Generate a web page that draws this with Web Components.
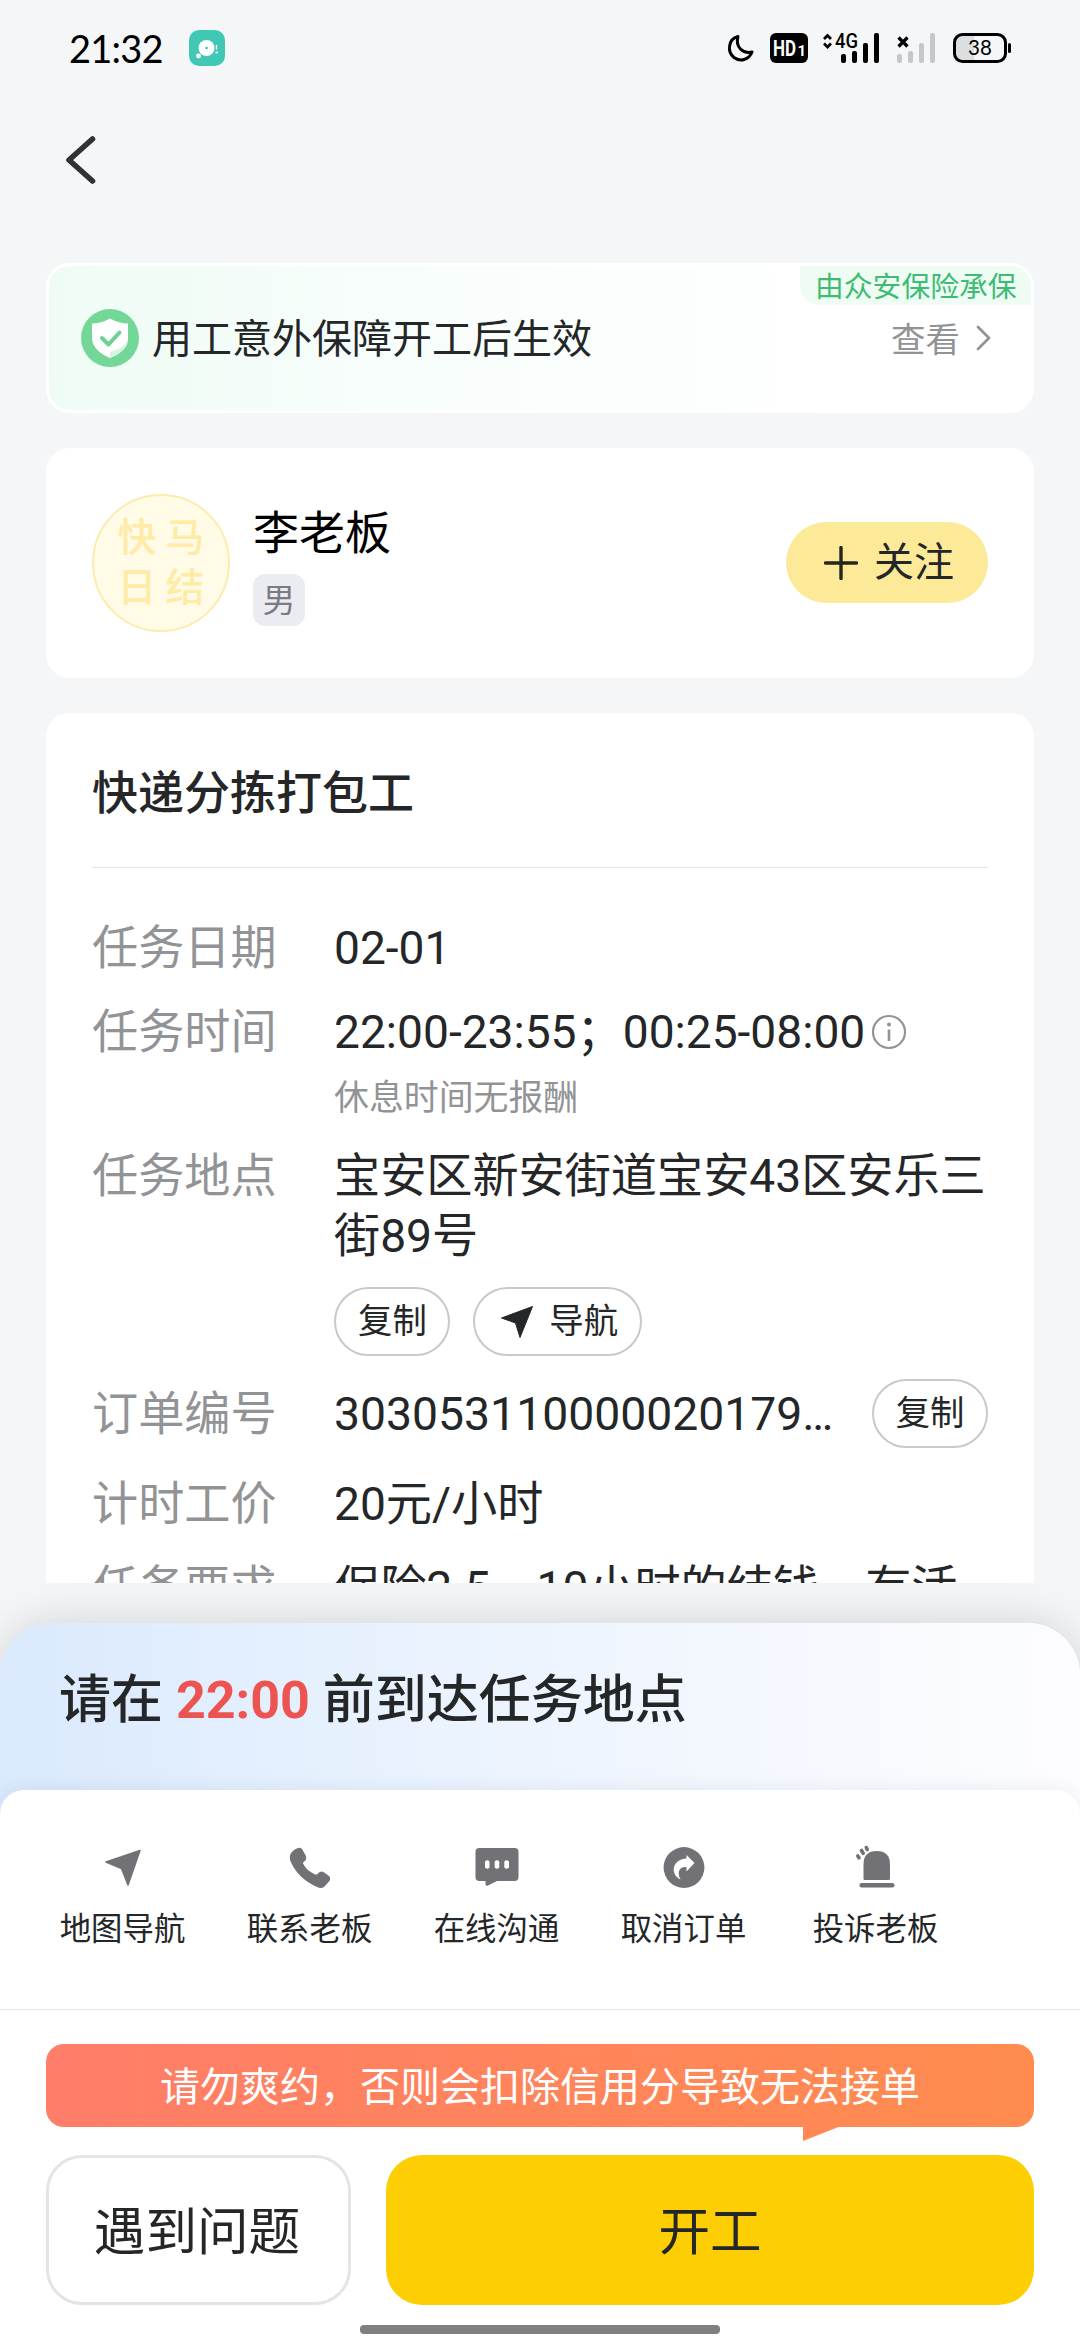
<!DOCTYPE html>
<html lang="zh-CN">
<head>
<meta charset="utf-8">
<title>任务详情</title>
<style>
  html, body { margin: 0; padding: 0; }
  body {
    width: 1080px; height: 2340px; overflow: hidden; background: #f4f6f8; color: #242628;
    font-family: Roboto, "Noto Sans CJK SC", sans-serif; font-size: 46.15px;
  }
</style>
</head>
<body>
<order-page></order-page>
<script>
const define = (name, html) => {
  const tpl = document.createElement('template');
  tpl.innerHTML = '<style>*{box-sizing:border-box}svg{display:block;flex:none}</style>' + html;
  customElements.define(name, class extends HTMLElement {
    constructor() {
      super();
      this.attachShadow({ mode: 'open' }).appendChild(tpl.content.cloneNode(true));
    }
  });
};

define('status-bar', `
<style>
  :host { display: flex; height: 96px; align-items: center; padding: 0 68px 0 69px; color: #000; box-sizing: border-box; }
  .time { font: 400 38px/40px Lato, sans-serif; letter-spacing: -0.8px; width: 120px; white-space: nowrap; margin-top: -1px; }
  .right { margin-left: auto; }
  text { font-family: Roboto, sans-serif; }
</style>
<span class="time">21:32</span>
<svg width="36" height="36" viewBox="0 0 36 36"><rect width="36" height="36" rx="10" fill="#40c8b5"/><circle cx="17.5" cy="18" r="8" fill="#fff"/><circle cx="17.5" cy="18" r="1.3" fill="#40c8b5"/><circle cx="9.5" cy="26" r="2.4" fill="#fff"/><path d="M27.5 15v4.600M26.500 22.500h2.500" stroke="#fff" stroke-width="1.300"/></svg>
<svg class="right" width="286" height="36" viewBox="726 30 286 36">
  <path d="M738 36.500C728 39 727 52 734 57.500C740 62 749 60 752 52C743 54 735 47 738 36.500Z" fill="none" stroke="#000" stroke-width="3" stroke-linejoin="round"/>
  <rect x="770" y="33" width="38" height="30" rx="6"/>
  <text x="773" y="56" font-size="22.500" font-weight="700" fill="#fff" textLength="23" lengthAdjust="spacingAndGlyphs">HD</text>
  <text x="797.500" y="56" font-size="15" font-weight="700" fill="#fff">1</text>
  <path d="M824 39l3.500-3.500 3.500 3.500M824 43.500l3.500 3.500 3.500-3.500" fill="none" stroke="#000" stroke-width="2.700"/>
  <text x="835" y="48" font-size="20.500" font-weight="500" textLength="23" lengthAdjust="spacingAndGlyphs">4G</text>
  <g><rect x="841" y="54" width="5" height="9" rx="2"/><rect x="852" y="51" width="5" height="12" rx="2"/><rect x="863" y="43" width="5" height="20" rx="2"/><rect x="874" y="33" width="5" height="30" rx="2"/></g>
  <path d="M898.500 37.500l9 9m0-9l-9 9" stroke="#000" stroke-width="3.200"/>
  <g fill="#c6c7c8"><rect x="897" y="54" width="5" height="9" rx="2"/><rect x="908" y="51" width="5" height="12" rx="2"/><rect x="919" y="43" width="5" height="20" rx="2"/><rect x="930" y="33" width="5" height="30" rx="2"/></g>
  <path d="M974 35h-11q-8 0-8 8v10q0 8 8 8h11z" fill="#dddedf"/>
  <rect x="954.500" y="34.500" width="51" height="27" rx="8" fill="none" stroke="#000" stroke-width="3"/>
  <rect x="1008" y="43" width="3" height="10" rx="1.500"/>
  <text x="980" y="55" font-size="20.500" font-weight="400" text-anchor="middle" style="font-family:Lato,sans-serif">38</text>
</svg>`);

define('nav-header', `
<style>:host { display: flex; height: 167px; padding: 38px 0 0 64px; box-sizing: border-box; }</style>
<svg width="34" height="52" viewBox="0 0 34 52"><path d="M28.500 5L5 26L28.500 47" fill="none" stroke="#303234" stroke-width="5.600" stroke-linecap="round" stroke-linejoin="round"/></svg>`);

define('insurance-banner', `
<style>
  :host { display: flex; height: 150px; align-items: center; box-sizing: border-box; border: 3px solid #fff; border-radius: 24px;
    background: linear-gradient(90deg, #effcf5 0, #f6fdfa 30%, #fff 80%); padding: 0 40px 0 32px; position: relative; }
  .txt { font-size: 40px; line-height: 58px; margin: 3px 0 0 13px; flex: 1; }
  .more { font-size: 34.500px; line-height: 48px; color: #929396; margin: 3px 16px 0 0; }
  .tag { position: absolute; right: 0; top: 0; height: 39px; width: 231px; padding-left: 15px; font-size: 28.800px; line-height: 43px;
    color: #3fbc73; background: #eefcf4; border-radius: 0 20px 0 20px; white-space: nowrap; }
</style>
<svg width="58" height="58" viewBox="0 0 58 58"><circle cx="29" cy="29" r="29" fill="#72d797"/><path d="M29 9.500q9 5 18 5v14q0 13-18 20.500Q11 41.500 11 28.500v-14q9 0 18-5z" fill="#fff"/><path d="M47 32q-1 10-18 17V43q12-3 18-11z" fill="#d8f3e2"/><path d="M21 29l6.500 6.500 11-12" fill="none" stroke="#6fd194" stroke-width="4" stroke-linecap="round" stroke-linejoin="round"/></svg>
<span class="txt"><slot></slot></span>
<span class="more">查看</span>
<svg width="15" height="26" viewBox="0 0 15 26"><path d="M2 2L13 13L2 24" fill="none" stroke="#929396" stroke-width="2.800" stroke-linecap="round" stroke-linejoin="round"/></svg>
<span class="tag"><slot name="insurer"></slot></span>`);

define('boss-card', `
<style>
  :host { display: flex; height: 230px; align-items: center; box-sizing: border-box; border-radius: 24px; background: #fff; padding: 0 46px; }
  .avatar { width: 138px; height: 138px; border-radius: 50%; border: 2px solid #fbecae; background: #fffbe7; color: #fdeba6;
    display: grid; grid-template-columns: 48px 48px; justify-content: center; align-content: center; justify-items: center;
    font-weight: 500; font-size: 39px; line-height: 50px; }
  .info { display: flex; flex-direction: column; align-items: flex-start; margin-left: 23px; flex: 1; gap: 9px; }
  .name { font-size: 46px; line-height: 64px; color: #000; margin-top: 1px; }
  .sex { width: 52px; height: 52px; border-radius: 12px; background: #ebecf2; color: #7b7c80; font-size: 33px; line-height: 53px; text-align: center; }
  .follow { display: flex; align-items: center; gap: 16px; width: 202px; height: 81px; border-radius: 41px; background: #fdea98; padding-left: 38px; font-size: 40px; line-height: 82px; margin-top: -1px; }
</style>
<div class="avatar"><span>快</span><span>马</span><span>日</span><span>结</span></div>
<div class="info"><span class="name"><slot></slot></span><span class="sex"><slot name="sex"></slot></span></div>
<div class="follow"><svg width="34" height="34" viewBox="0 0 34 34"><path d="M17 1.500v31M1.500 17h31" stroke="#26251d" stroke-width="3.400" stroke-linecap="round"/></svg><span>关注</span></div>`);

define('pill-button', `
<style>:host { display: inline-flex; flex: none; height: 69px; box-sizing: border-box; align-items: center; gap: 15px; border: 2px solid #c8c9cb; border-radius: 35px; padding: 0 21.500px 0 22px; font-size: 34.400px; line-height: 67px; color: #242628; background: #fff; }</style>
<slot name="icon"></slot><slot></slot>`);

define('info-row', `
<style>
  :host { display: flex; line-height: 60px; }
  .label { flex: none; width: 242px; color: #929396; }
  .value { flex: 1; min-width: 0; }
</style>
<div class="label"><slot name="label"></slot></div><div class="value"><slot></slot></div>`);

define('task-card', `
<style>
  :host { display: block; height: 870px; overflow: hidden; box-sizing: border-box; border-radius: 24px 24px 0 0; background: #fff; padding: 0 46px; }
  h2 { margin: 0; height: 155px; line-height: 160px; font-size: 46px; font-weight: 500; border-bottom: 1px solid #e4e5e7; }
  .rows { display: flex; flex-direction: column; padding-top: 50px; }
  .rows > * { margin-bottom: 24px; }
  .time { display: flex; align-items: center; white-space: nowrap; gap: 6px; }
  .note { font-size: 34.900px; line-height: 48px; color: #929396; margin-top: 13px; }
  .btns { display: flex; gap: 23px; margin-top: 21px; }
  .order { display: flex; align-items: center; justify-content: space-between; height: 69px; }
  .no { white-space: nowrap; font-size: 46.300px; padding-top: 1px; }
</style>
<h2><slot></slot></h2>
<div class="rows">
  <info-row><span slot="label">任务日期</span>02-01</info-row>
  <info-row style="margin-bottom:23px"><span slot="label">任务时间</span>
    <div class="time"><span>22:00-23:55；00:25-08:00</span><svg width="36" height="36" viewBox="0 0 36 36"><circle cx="18" cy="18" r="16" fill="none" stroke="#929396" stroke-width="2.200"/><circle cx="18" cy="10.500" r="2" fill="#929396"/><path d="M18 15.500v11.500" stroke="#929396" stroke-width="2.600"/></svg></div>
    <div class="note">休息时间无报酬</div></info-row>
  <info-row style="margin-bottom:23px"><span slot="label">任务地点</span>宝安区新安街道宝安43区安乐三街89号
    <div class="btns"><pill-button>复制</pill-button><pill-button style="padding:0 22px 0 25px"><svg slot="icon" width="34" height="34" viewBox="0 0 34 34"><path d="M32.500 1.500L1.500 13L15.500 18L20 32.500Z" fill="#242628" stroke="#242628" stroke-linejoin="round"/></svg>导航</pill-button></div></info-row>
  <info-row style="line-height:71px;margin-bottom:24px;height:71px"><span slot="label">订单编号</span><div class="order"><span class="no">303053110000020179…</span><pill-button>复制</pill-button></div></info-row>
  <info-row><span slot="label">计时工价</span>20元/小时</info-row>
  <info-row><span slot="label">任务要求</span>保险2.5，10小时的结钱，有活</info-row>
</div>`);

define('action-item', `
<style>:host { display: flex; flex-direction: column; align-items: center; width: 187px; gap: 15px; font-size: 31.400px; line-height: 46px; color: #242628; }</style>
<slot name="icon"></slot><span><slot></slot></span>`);

define('tip-bubble', `
<style>
  :host { display: block; position: relative; height: 83px; border-radius: 18px; background: linear-gradient(90deg, #ff7d69, #ff8c4e); color: #fff; font-size: 40px; line-height: 88px; text-align: center; }
  svg { position: absolute; left: 757px; top: 82px; }
</style>
<slot></slot><svg width="38" height="16" viewBox="0 0 38 16"><path d="M0 0h38L0 15z" fill="#ff8855"/></svg>`);

define('big-button', `
<style>
  :host { display: block; box-sizing: border-box; height: 150px; line-height: 156px; border-radius: 36px; text-align: center; font-size: 51.600px; flex: 1; background: #fdce03; }
  :host([plain]) { flex: none; width: 305px; line-height: 150px; padding-right: 3px; background: #fff; border: 3px solid #e4e4e5; }
</style><slot></slot>`);

define('arrival-sheet', `
<style>
  :host { display: flex; flex-direction: column; height: 717px; margin-top: 40px; border-radius: 52px 52px 0 0; overflow: visible;
    background: linear-gradient(90deg, #dae9fd 0, #e6f1fe 30%, #f1f6fe 60%, #fdfdff 100%); box-shadow: 0 0 46px rgba(0,0,0,.15); }
  .title { height: 167px; line-height: 156px; padding-left: 59px; font-size: 52px; font-weight: 500; white-space: pre; }
  .title b { color: #eb5451; font-weight: 700; }
  .panel { flex: 1; display: flex; flex-direction: column; background: #fff; border-radius: 24px 24px 0 0; box-shadow: 0 0 20px rgba(60,70,90,.09); }
  .actions { display: flex; height: 220px; padding: 54px 0 0 29px; border-bottom: 1px solid #e6e6e8; }
  .foot { display: flex; flex-direction: column; padding: 34px 46px 0; }
  .btns { display: flex; gap: 35px; margin-top: 28px; }
  .home { width: 360px; height: 9px; border-radius: 4px; background: #808080; margin: 20px auto 0; }
  svg { fill: #717176; }
</style>
<div class="title">请在 <b>22:00</b> 前到达任务地点</div>
<div class="panel">
  <div class="actions">
    <action-item><svg slot="icon" width="48" height="48" viewBox="0 0 48 48"><path d="M41 6.500L7 18L22.500 24.500L29 41Z" stroke="#717176" stroke-width="1.500" stroke-linejoin="round"/></svg>地图导航</action-item>
    <action-item><svg slot="icon" width="48" height="48" viewBox="0 0 48 48"><path d="M12 4Q14 3 16 5L20 12Q21 16 17.500 18L17 19.500Q20 26 29 30.500L31 30.500Q34 26.500 37.500 28L43 32Q45 34 43.500 37L38 43Q35 45 31 43Q11 34 4 16Q3 12 5 9Q8 5 12 4Z"/></svg>联系老板</action-item>
    <action-item><svg slot="icon" width="48" height="48" viewBox="0 0 48 48"><path fill-rule="evenodd" d="M6.500 4H41.500Q45.500 4 45.500 8V33Q45.500 37 41.500 37H24L15 41.500Q12.500 42.500 12.500 40V37H6.500Q2.500 37 2.500 33V8Q2.500 4 6.500 4ZM12 17.500V23.500Q14.500 26 16.500 23.500V17.500Q14.500 15 12 17.500ZM21.700 17.500V23.500Q24 26 26.300 23.500V17.500Q24 15 21.700 17.500ZM31.300 17.500V23.500Q33.500 26 36 23.500V17.500Q33.500 15 31.300 17.500Z"/></svg>在线沟通</action-item>
    <action-item><svg slot="icon" width="48" height="48" viewBox="0 0 48 48"><circle cx="24" cy="23.500" r="20.400"/><path d="M26.500 11L34.500 19L26.500 27.500V23C18.500 22.500 17 29 20.500 35.500C10.500 31 11 15.500 26.500 14.500Z" fill="#fff"/></svg>取消订单</action-item>
    <action-item style="width:197px"><svg slot="icon" width="48" height="48" viewBox="-2 0 48 48"><path d="M9.500 34.500V20.500Q9.500 7 22.700 7Q36 7 36 20.500V34.500Q36 36 34.500 36H11Q9.500 36 9.500 34.500Z"/><rect x="5.500" y="39" width="35" height="4.500" rx="2.200"/><path d="M3.800 12L5 13.800M7.500 6.500L9.200 9.300M12.300 3.500L13.200 5.500" stroke="#717176" stroke-width="3.600" stroke-linecap="round"/></svg>投诉老板</action-item>
  </div>
  <div class="foot">
    <tip-bubble>请勿爽约，否则会扣除信用分导致无法接单</tip-bubble>
    <div class="btns"><big-button plain>遇到问题</big-button><big-button>开工</big-button></div>
    <div class="home"></div>
  </div>
</div>`);

define('order-page', `
<style>
  :host { display: flex; flex-direction: column; height: 2340px; }
  main { display: flex; flex-direction: column; gap: 35px; padding: 0 46px; }
</style>
<status-bar></status-bar>
<nav-header></nav-header>
<main>
  <insurance-banner>用工意外保障开工后生效<span slot="insurer">由众安保险承保</span></insurance-banner>
  <boss-card>李老板<span slot="sex">男</span></boss-card>
  <task-card>快递分拣打包工</task-card>
</main>
<arrival-sheet></arrival-sheet>`);
</script>
</body>
</html>
